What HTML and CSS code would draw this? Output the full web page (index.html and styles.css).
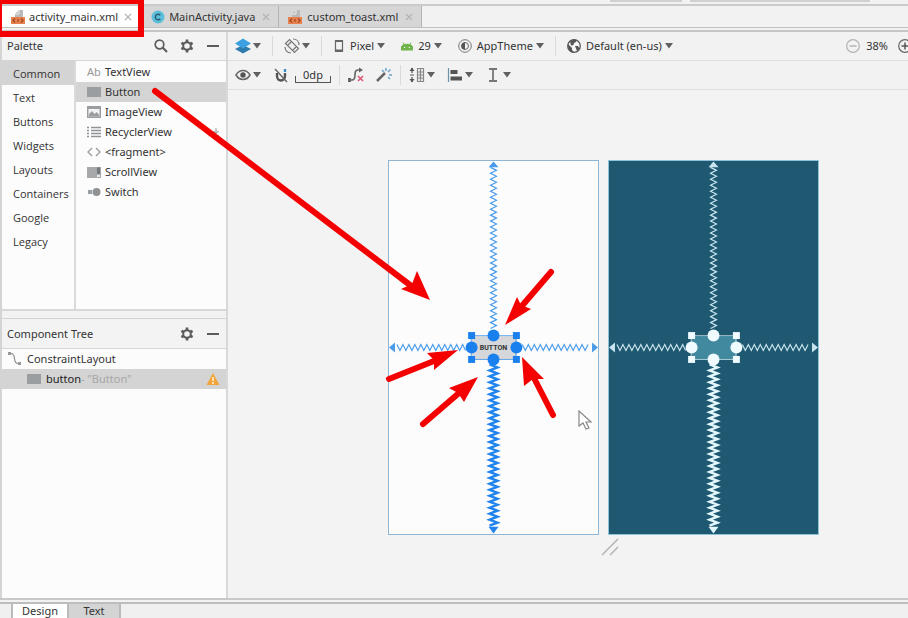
FILE: index.html
```html
<!DOCTYPE html>
<html lang="en">
<head>
<meta charset="utf-8">
<title>activity_main.xml</title>
<link rel="stylesheet" href="styles.css">
</head>
<body>
<svg class="defs" aria-hidden="true">
  <defs>
    <symbol id="caret" viewBox="0 0 8 6"><path d="M0 0h8L4 5.500z" fill="#606060"/></symbol>
    <symbol id="close" viewBox="0 0 8 8"><path d="M1 1l6 6M7 1L1 7" stroke="#b4b4b4" stroke-width="1.200"/></symbol>
    <symbol id="xml" viewBox="0 0 16 16"><path d="M5 8V5l4-4h4v7z" fill="#b9b9b9"/><path d="M5 5h4V1" fill="none" stroke="#eee"/><path d="M1 8h14v7H1z" fill="#e8804e"/><path d="M5 9.500L3 11.500l2 2M11 9.500l2 2-2 2M8 10v3" fill="none" stroke="#9d4a22" stroke-width="1.200"/></symbol>
    <symbol id="gear" viewBox="0 0 14 14"><path d="M7 3V.500M7 11v2.500M3.500 5L1.400 3.800M10.500 9l2.100 1.200M3.500 9l-2.100 1.200M10.500 5l2.100-1.200" stroke="#5c5c5c" stroke-width="2.600"/><circle cx="7" cy="7" r="3.800" fill="none" stroke="#5c5c5c" stroke-width="2"/></symbol>
    <symbol id="minus" viewBox="0 0 14 14"><path d="M1 7h12" stroke="#5c5c5c" stroke-width="2"/></symbol>
    <symbol id="box" viewBox="0 0 14 14"><path d="M0 2h14v10H0z" fill="#9b9ea1"/></symbol>
  </defs>
</svg>

<div class="strip"><span class="stub"></span><span class="stub stub-wide"></span></div>

<nav class="file-tabs">
  <button class="file-tab active"><svg class="i16"><use href="#xml"/></svg><span>activity_main.xml</span><svg class="i8"><use href="#close"/></svg></button>
  <button class="file-tab"><svg class="i14" viewBox="0 0 14 14"><circle cx="7" cy="7" r="6.500" fill="#5bbfdc"/><path d="M9.300 5.200A2.800 2.800 0 1 0 9.300 8.800" fill="none" stroke="#2d5c70" stroke-width="1.500"/></svg><span>MainActivity.java</span><svg class="i8"><use href="#close"/></svg></button>
  <button class="file-tab"><svg class="i16"><use href="#xml"/></svg><span>custom_toast.xml</span><svg class="i8"><use href="#close"/></svg></button>
</nav>

<main class="workspace">
  <aside class="side">
    <section class="palette">
      <header class="head">
        <h2>Palette</h2>
        <button class="icon-btn" aria-label="Search"><svg class="i14" viewBox="0 0 14 14"><circle cx="5.500" cy="5.500" r="4.300" fill="none" stroke="#5c5c5c" stroke-width="1.700"/><path d="M8.600 8.600L13 13" stroke="#5c5c5c" stroke-width="2.100"/></svg></button>
        <button class="icon-btn" aria-label="Palette settings"><svg class="i14"><use href="#gear"/></svg></button>
        <button class="icon-btn" aria-label="Hide palette"><svg class="i14"><use href="#minus"/></svg></button>
      </header>
      <div class="palette-body">
        <ul class="groups">
          <li class="on">Common</li><li>Text</li><li>Buttons</li><li>Widgets</li><li>Layouts</li><li>Containers</li><li>Google</li><li>Legacy</li>
        </ul>
        <ul class="widgets">
          <li><span class="ab">Ab</span>TextView</li>
          <li class="on"><svg class="i14"><use href="#box"/></svg>Button</li>
          <li><svg class="i14" viewBox="0 0 14 14"><path d="M0 1h14v12H0z" fill="#9b9ea1"/><path d="M1.500 4h11v7.500h-11z" fill="#f4f4f4"/><path d="M2 11.500V9l3-3 2.500 3L9.500 7 12 9.500v2z" fill="#9b9ea1"/></svg>ImageView</li>
          <li><svg class="i14" viewBox="0 0 14 14"><path d="M4 2.500h10M4 5.500h10M4 8.500h10M4 11.500h10" stroke="#909396" stroke-width="1.300"/><path d="M0 2.500h2M0 5.500h2M0 8.500h2M0 11.500h2" stroke="#909396" stroke-width="1.300"/></svg>RecyclerView<svg class="i8 download" viewBox="0 0 8 8"><path d="M4 0v5M1.500 3L4 5.500 6.500 3M1 7.500h6" fill="none" stroke="#a8a8a8" stroke-width="1.200"/></svg></li>
          <li><svg class="i14" viewBox="0 0 14 14"><path d="M5 3L1 7l4 4M9 3l4 4-4 4" fill="none" stroke="#9b9ea1" stroke-width="1.400"/></svg>&lt;fragment&gt;</li>
          <li><svg class="i14" viewBox="0 0 14 14"><path d="M0 2h14v11H0z" fill="#a6a8aa"/><path d="M10 2.500h3v7h-3z" fill="#75787b"/><path d="M10 9.500h3V12h-3z" fill="#e4e4e4"/></svg>ScrollView</li>
          <li><svg class="i14" viewBox="0 0 14 14"><path d="M1 5h4v4H1z" fill="#9b9ea1"/><circle cx="9.500" cy="7" r="4" fill="#8f9295"/></svg>Switch</li>
        </ul>
      </div>
    </section>
    <section class="tree">
      <header class="head">
        <h2>Component Tree</h2>
        <button class="icon-btn" aria-label="Tree settings"><svg class="i14"><use href="#gear"/></svg></button>
        <button class="icon-btn" aria-label="Hide tree"><svg class="i14"><use href="#minus"/></svg></button>
      </header>
      <ul class="nodes">
        <li><svg class="i14" viewBox="0 0 14 14"><path d="M0 1.500h3M3 1.500c6 0 1 10 7 10" fill="none" stroke="#8d8d8d" stroke-width="1.200"/><path d="M0 0h3v3H0zM10 10h3v3h-3z" fill="#999"/></svg>ConstraintLayout</li>
        <li class="on child"><svg class="i14"><use href="#box"/></svg><span>button<span class="hint">- "Button"</span></span><svg class="i14 warn" viewBox="0 0 14 14"><path d="M7 1l6.500 12H.500z" fill="#f0a43a"/><path d="M7 5v4M7 10v2" stroke="#fff3d8" stroke-width="1.500"/></svg></li>
      </ul>
    </section>
  </aside>

  <section class="editor">
    <div class="toolbar">
      <button class="tool" aria-label="Design surface"><svg class="i16" viewBox="0 0 16 16"><path d="M8 7l8 4-8 4.500L0 11z" fill="#2e7cae"/><path d="M8 .500l8 5-8 5-8-5z" fill="#3b9fe0"/></svg><svg class="caret"><use href="#caret"/></svg></button>
      <span class="sep"></span>
      <button class="tool" aria-label="Orientation"><svg class="i16" viewBox="0 0 16 16"><g fill="none" stroke="#777" stroke-width="1.200"><path d="M1.500 5.500l4-4 9 9-4 4zM3.500 7.500l4-4M8.500 12.500l4-4"/><path d="M9 1c4 0 6 3 6 6M7 15c-4 0-6-3-6-6"/></g></svg><svg class="caret"><use href="#caret"/></svg></button>
      <span class="sep"></span>
      <button class="tool"><svg class="i12" viewBox="0 0 12 14"><path d="M2.500 1.500h7v11h-7z" fill="none" stroke="#666" stroke-width="1.200"/><path d="M2 2h8M2 11.500h8" stroke="#666" stroke-width="2"/></svg><span>Pixel</span><svg class="caret"><use href="#caret"/></svg></button>
      <button class="tool"><svg class="i12" viewBox="0 0 12 14"><path d="M0 11V9c0-5 12-5 12 0v2zM2 3.500l2 3M10 3.500l-2 3" fill="#70b44c" stroke="#70b44c"/><path d="M3 8.500h1.200M7.800 8.500H9" stroke="#fff"/></svg><span>29</span><svg class="caret"><use href="#caret"/></svg></button>
      <button class="tool"><svg class="i14" viewBox="0 0 14 14"><circle cx="7" cy="7" r="6.300" fill="none" stroke="#777"/><circle cx="7" cy="7" r="3.500" fill="none" stroke="#666"/><path d="M7 3.500a3.500 3.500 0 0 0 0 7z" fill="#555"/></svg><span>AppTheme</span><svg class="caret"><use href="#caret"/></svg></button>
      <span class="sep"></span>
      <button class="tool"><svg class="i14" viewBox="0 0 14 14"><circle cx="7" cy="7" r="6.300" fill="#f4f4f4" stroke="#555" stroke-width="1.300"/><path d="M1 5l3 3 1 1v2l2 2-1 .500C3 13 .500 10 1 5zM3 2.500C5 .500 8 .300 9.500 1L9 3 7 4 6.500 6 4 6.500zM8 7h3l1.500 2.500L10 12 9 9.500z" fill="#555"/></svg><span>Default (en-us)</span><svg class="caret"><use href="#caret"/></svg></button>
      <div class="zoom">
        <button class="icon-btn" aria-label="Zoom out"><svg class="i14" viewBox="0 0 14 14"><circle cx="7" cy="7" r="6.300" fill="none" stroke="#b4b4b4" stroke-width="1.200"/><path d="M3.500 7h7" stroke="#aaa" stroke-width="1.300"/></svg></button>
        <span>38%</span>
        <button class="icon-btn" aria-label="Zoom in"><svg class="i14" viewBox="0 0 14 14"><circle cx="7" cy="7" r="6.300" fill="none" stroke="#666" stroke-width="1.200"/><path d="M3.500 7h7M7 3.500v7" stroke="#555" stroke-width="1.500"/></svg></button>
      </div>
    </div>

    <div class="toolbar constraints">
      <button class="tool" aria-label="View options"><svg class="i16" viewBox="0 0 16 16"><path d="M1 8c3.500-6 10.500-6 14 0-3.500 6-10.500 6-14 0z" fill="none" stroke="#666" stroke-width="1.500"/><circle cx="8" cy="8" r="2.700" fill="#555"/></svg><svg class="caret"><use href="#caret"/></svg></button>
      <button class="tool" aria-label="Autoconnect"><svg class="i16" viewBox="0 0 16 16"><path d="M4 6v3c0 6 8 6 8 0V6" fill="none" stroke="#555" stroke-width="2.400"/><path d="M12 2v3" stroke="#3b8dc8" stroke-width="2.400"/><path d="M2 2l12 13" stroke="#666" stroke-width="1.400"/></svg></button>
      <button class="tool margin-tool" aria-label="Default margins">0dp</button>
      <span class="sep"></span>
      <button class="tool" aria-label="Clear constraints"><svg class="i16" viewBox="0 0 16 16"><path d="M1 13h3c6 0 0-10 6-10h4" fill="none" stroke="#666" stroke-width="1.600"/><path d="M11 .500L15 3l-4 2.500zM0 11h3v4H0z" fill="#666"/><path d="M10 9l5 5M15 9l-5 5" stroke="#dc5878" stroke-width="1.600"/></svg></button>
      <button class="tool" aria-label="Infer constraints"><svg class="i16" viewBox="0 0 16 16"><path d="M1 14L9 6" stroke="#666" stroke-width="2.500"/><path d="M10 1v3M6 3l2 2M13 8h3M12 10l2 2M12 5l2.500-2.500" stroke="#6aa7cb" stroke-width="1.500"/></svg></button>
      <span class="sep"></span>
      <button class="tool" aria-label="Pack"><svg class="i16" viewBox="0 0 16 16"><path d="M3 1v5M3 10v5" stroke="#555" stroke-width="1.300"/><path d="M.500 4L3 .500 5.500 4zM.500 12L3 15.500 5.500 12zM1 7.500h4v1H1z" fill="#555"/><path d="M8.500 1.500h6v13h-6zM8.500 5h6M8.500 8h6M8.500 11h6M11.500 1.500v13" fill="none" stroke="#888" stroke-width="1.200"/></svg><svg class="caret"><use href="#caret"/></svg></button>
      <button class="tool" aria-label="Align"><svg class="i16" viewBox="0 0 16 16"><path d="M1.500 1v14" stroke="#6b93ad" stroke-width="1.200"/><path d="M3.500 3h7v4h-7zM3.500 9.500H15v4H3.500z" fill="#555"/></svg><svg class="caret"><use href="#caret"/></svg></button>
      <button class="tool" aria-label="Guidelines"><svg class="i16" viewBox="0 0 16 16"><path d="M4 2h8M4 14h8M8 2v12" stroke="#777" stroke-width="1.800"/></svg><svg class="caret"><use href="#caret"/></svg></button>
    </div>

    <div class="surface">
      <div class="device design">
        <svg class="springs" viewBox="0 0 210 374" data-springs></svg>
        <button class="placed">BUTTON</button>
        <svg class="springs handles" viewBox="0 0 210 374" data-handles></svg>
      </div>
      <div class="device blueprint">
        <svg class="springs" viewBox="0 0 210 374" data-springs></svg>
        <button class="placed" aria-label="Button"></button>
        <svg class="springs handles" viewBox="0 0 210 374" data-handles></svg>
      </div>
      <svg class="grip" viewBox="0 0 18 18"><path d="M1 17L17 1M9 17l8-8" stroke="#b5b5b5" stroke-width="1.500"/></svg>
    </div>
  </section>
</main>

<footer class="mode-tabs">
  <button class="mode active">Design</button><button class="mode">Text</button>
</footer>

<svg class="notes" viewBox="0 0 908 618" aria-hidden="true">
  <path d="M-1 1H141V34H-1z" fill="none" stroke="#f40000" stroke-width="6"/>
  <g stroke="#f40000" stroke-width="6" stroke-linecap="round">
    <path d="M155 91L410 285M551 272L521 307M389 379L434 361M423 424L459 393M553 415L535 380"/>
  </g>
  <g fill="#f40000">
    <path d="M430 300L401 289 412 284 417 271z"/>
    <path d="M505 325L517 297 521 305 531 309z"/>
    <path d="M458 350L427 353 434 360 434 370z"/>
    <path d="M478 377L449 388 458 393 464 402z"/>
    <path d="M522 357L524 386 533 379 544 379z"/>
  </g>
</svg>
<svg class="pointer" viewBox="0 0 14 20" aria-hidden="true"><path d="M1 1v15l4-3 3 6 3-1-3-6h5z" fill="#fdfdfd" stroke="#888" stroke-width="1.200"/></svg>
<script src="surface.js"></script>
</body>
</html>
```
FILE: styles.css
```css
* { box-sizing: border-box; }
html, body { height: 100%; }
body {
  margin: 0;
  display: flex;
  flex-direction: column;
  position: relative;
  overflow: hidden;
  background: #f2f2f2;
  color: #333;
  font: 11px/16px "Noto Sans", "Open Sans", sans-serif;
}
button { font: inherit; color: inherit; border: 0; background: none; padding: 0; margin: 0; }
ul { list-style: none; margin: 0; padding: 0; }
svg { display: block; flex: none; }
.defs { position: absolute; width: 0; height: 0; }
.i8 { width: 8px; height: 8px; }
.i12 { width: 12px; height: 14px; }
.i14 { width: 14px; height: 14px; }
.i16 { width: 16px; height: 16px; }
.caret { width: 8px; height: 6px; }

.strip { height: 6px; display: flex; justify-content: flex-end; gap: 8px; padding-right: 38px; border-bottom: 2px solid #cbcbcb; }
.stub { width: 72px; height: 2px; background: #d2d0d0; }
.stub-wide { width: 180px; }

.file-tabs { display: flex; height: 22px; border-bottom: 1px solid #c0c0c0; }
.file-tab { display: flex; align-items: center; gap: 4px; padding: 0 8px; background: #d6d6d6; border-right: 1px solid #b4b4b4; }
.file-tab.active { gap: 3px; background: #fff; padding: 0 10px; }
.file-tab .i8 { margin-left: 3px; }

.workspace { flex: 1; min-height: 0; display: flex; margin-top: 2px; border-top: 2px solid #c6c6c6; border-bottom: 2px solid #c8c8c8; }
.side { width: 228px; flex: none; display: flex; flex-direction: column; border-left: 2px solid #d4d4d4; border-right: 2px solid #d8d8d8; }
.head { display: flex; align-items: center; gap: 12px; height: 29px; padding: 0 6px 0 5px; border-bottom: 1px solid #d4d4d4; background: #f3f3f3; }
.head h2 { flex: 1; margin: 0; font-size: 11px; font-weight: 400; }
.icon-btn { flex: none; }
.palette-body { display: flex; height: 250px; background: #fcfcfc; border-bottom: 2px solid #d8d8d8; }
.groups { width: 74px; font-family: "Open Sans", sans-serif; border-right: 2px solid #dadada; }
.groups li { height: 24px; line-height: 26px; padding-left: 11px; }
.widgets { flex: 1; padding-top: 1px; }
.widgets li { display: flex; align-items: center; gap: 4px; height: 20px; padding: 0 6px 0 11px; }
.ab { width: 14px; color: #999; }
.download { margin-left: auto; }
.on { background: #d4d4d4; }
.tree { flex: 1; margin-top: 7px; border-top: 1px solid #d4d4d4; background: #fcfcfc; }
.tree .head { height: 30px; }
.nodes li { display: flex; align-items: center; gap: 5px; height: 20px; padding: 0 6px; }
.nodes .child { padding-left: 25px; color: #222; }
.hint { color: #a6a6a6; }
.warn { margin-left: auto; }

.editor { flex: 1; min-width: 0; display: flex; flex-direction: column; }
.toolbar { display: flex; align-items: center; height: 29px; padding-left: 7px; border-bottom: 1px solid #dedede; white-space: nowrap; }
.tool { display: flex; align-items: center; gap: 5px; flex: none; }
.tool .caret { margin-left: -3px; }
.tool span + .caret { margin-left: -2px; }
.tool + .tool { margin-left: 16px; }
.constraints .tool + .tool { margin-left: 12px; }
.sep { width: 1px; height: 20px; margin: 0 11px; background: #dadada; flex: none; }
.constraints .sep { margin: 0 8px; }
.margin-tool { width: 36px; height: 16px; justify-content: center; border: solid #555; border-width: 0 1px 1px; border-image: linear-gradient(transparent 60%, #555 60%) 1; }
.constraints .tool + .margin-tool { margin-left: 6px; }
.zoom { display: flex; align-items: center; gap: 6px; margin-left: auto; margin-right: -4px; }
.zoom .icon-btn:last-child { margin-left: 4px; }

.surface { flex: 1; min-height: 0; display: flex; flex-wrap: wrap; align-content: flex-start; gap: 3px 9px; padding: 70px 88px 0 160px; background: #f3f3f3; overflow: hidden; }
.device { position: relative; display: grid; place-items: center; width: 211px; height: 375px; border: 1px solid #8fb6d4; background: #fcfcfc; color: #4a9ceb; }
.blueprint { border: 1px solid #8fc3da; background: #1e5871; color: #c9e4ee; }
.springs { position: absolute; inset: 0; width: 100%; height: 100%; overflow: visible; }
.springs .strong { color: #1f84ee; }
.blueprint .springs .strong { color: #e2f6fc; }
.handles { color: #1a80ee; }
.blueprint .handles { color: #effbff; }
.placed { width: 46px; height: 24px; background: #d5d7da; color: #333; font: bold 7px/24px Roboto, sans-serif; }
.blueprint .placed { background: #41899e; }
.grip { width: 18px; height: 18px; margin-left: 213px; }

.mode-tabs { display: flex; height: 16px; margin-top: 2px; padding-left: 11px; border-top: 2px solid #bdbdbd; background: #f0f0f0; }
.mode { height: 14px; width: 52px; line-height: 14px; background: #d4d4d4; border-right: 2px solid #bbb; }
.mode.active { width: 58px; background: #fff; border-left: 2px solid #bbb; }

.notes { position: absolute; left: 0; top: 0; width: 908px; height: 618px; pointer-events: none; }
.pointer { position: absolute; left: 578px; top: 410px; width: 14px; height: 20px; }
```
FILE: surface.js
```js
// Builds the spring lines and the selection handles of each device preview.
const cx = 105, cy = 187;

function zigzag(from, to, center, amp, vertical) {
  const points = [];
  let side = -1;
  for (let t = from; t <= to; t += 3, side = -side) {
    const s = center + side * amp;
    points.push(vertical ? `${s},${t}` : `${t},${s}`);
  }
  return points.join(" ");
}

for (const svg of document.querySelectorAll("[data-springs]")) {
  const line = (pts, w, cls = "weak") =>
    `<polyline class="${cls}" points="${pts}" fill="none" stroke="currentColor" stroke-width="${w}"/>`;
  svg.innerHTML =
    line(zigzag(6, 170, cx, 3, true), 1.2) +
    line(zigzag(204, 368, cx, 4, true), 2.4, "strong") +
    line(zigzag(8, 78, cy, 3, false), 1.2) +
    line(zigzag(134, 202, cy, 3, false), 1.2) +
    `<path fill="currentColor" d="M105 0l5 6h-10zM0 187l6-5v10zM210 187l-6-5v10z"/>` +
    `<path class="strong" fill="currentColor" d="M105 374l5-7h-10z"/>`;
}

for (const svg of document.querySelectorAll("[data-handles]")) {
  let shapes = `<rect x="82.500" y="175" width="45" height="24" fill="none" stroke="currentColor" stroke-opacity="0.600"/>`;
  for (const [x, y] of [[83, 175], [128, 175], [83, 199], [128, 199]]) {
    shapes += `<rect x="${x - 3.5}" y="${y - 3.5}" width="7" height="7" fill="currentColor"/>`;
  }
  for (const [x, y] of [[105, 175], [105, 199], [83, 187], [128, 187]]) {
    shapes += `<circle cx="${x}" cy="${y}" r="6" fill="currentColor"/>`;
  }
  svg.innerHTML = shapes;
}
```
